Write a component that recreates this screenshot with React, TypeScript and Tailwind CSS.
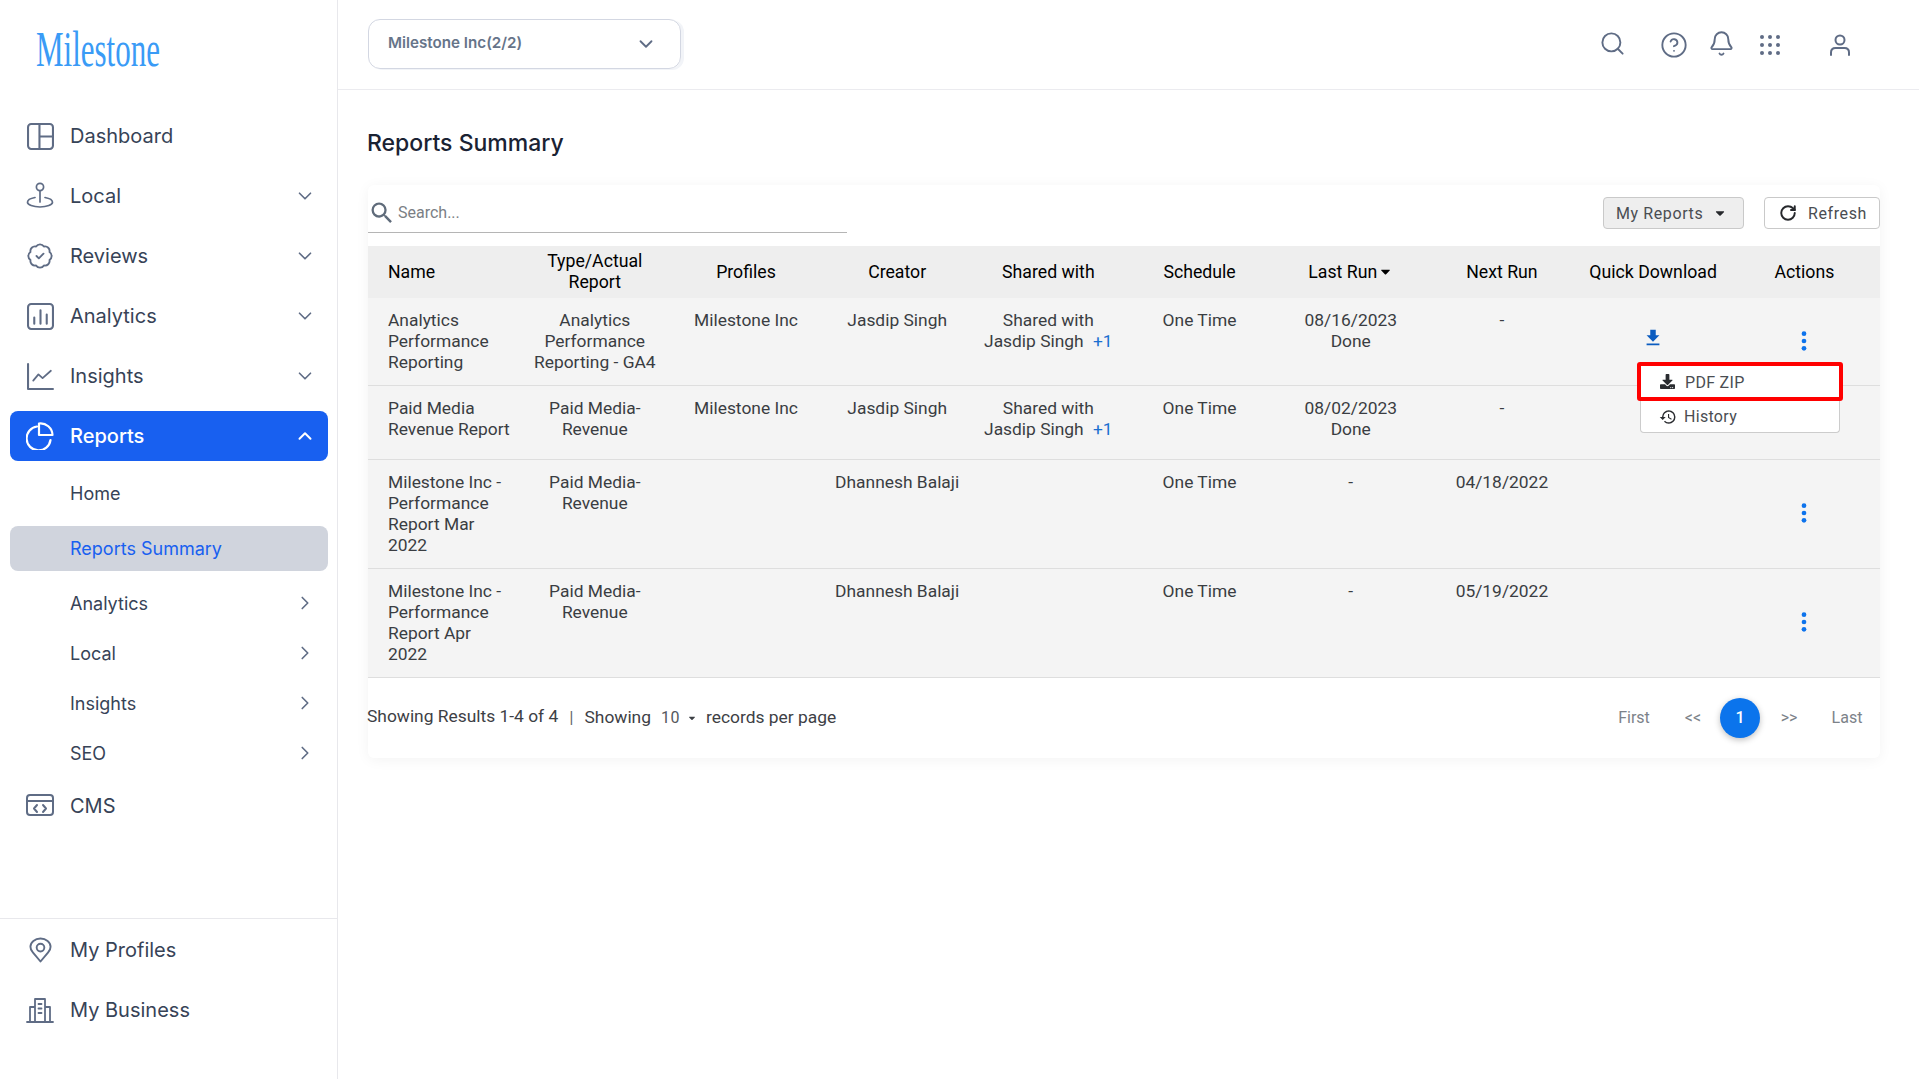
import React from "react";
import {
  BadgeCheck,
  Bell,
  ChevronDown,
  ChevronRight,
  ChevronUp,
  CircleHelp,
  RotateCw,
  Search,
} from "lucide-react";
import { FaCaretDown, FaDownload } from "react-icons/fa";
import { MdFileDownload, MdHistory, MdSearch } from "react-icons/md";

const stroke = {
  fill: "none",
  stroke: "currentColor",
  strokeWidth: 1.7,
  strokeLinecap: "round" as const,
  strokeLinejoin: "round" as const,
};

const DashboardIcon = () => (
  <svg viewBox="0 0 26 26" className="w-[27px] h-[27px]" {...stroke}>
    <rect x="1" y="1" width="24" height="24" rx="3" strokeWidth="2" />
    <path d="M12 1v24M12 13h13" strokeWidth="2" />
  </svg>
);

const LocalIcon = () => (
  <svg viewBox="0 0 28 28" className="w-[28px] h-[28px]" {...stroke}>
    <circle cx="14" cy="5" r="3.6" />
    <path d="M14 9v11" />
    <path d="M9 15.5c-4.5.8-7.5 2.5-7.5 4.7 0 2.6 5.600 4.800 12.500 4.800s12.500-2.200 12.500-4.800c0-2.200-3-3.900-7.500-4.700" />
  </svg>
);

const AnalyticsIcon = () => (
  <svg viewBox="0 0 26 26" className="w-[27px] h-[27px]" {...stroke}>
    <rect x="1" y="1" width="24" height="24" rx="3" strokeWidth="2" />
    <path d="M7 20v-6M13 20V7M19 20V11" strokeWidth="2" />
  </svg>
);

const InsightsIcon = () => (
  <svg viewBox="0 0 26 26" className="w-[27px] h-[27px]" {...stroke}>
    <path d="M1 1v24h24" strokeWidth="2" />
    <path d="M6 17l5-6 4 3.500 8-7" />
  </svg>
);

const ReportsIcon = () => (
  <svg viewBox="0 0 28 28" className="w-[28px] h-[28px]" {...stroke} strokeWidth="2.200">
    <path d="M11 4.500a12 12 0 1 0 13.500 13.500" />
    <path d="M13 1.500v11.500h13.500A12 12 0 0 0 13 1.500z" />
  </svg>
);

const CmsIcon = () => (
  <svg viewBox="0 0 28 24" className="w-[28px] h-[24px]" {...stroke} strokeWidth="2">
    <rect x="1" y="1" width="26" height="20" rx="3" />
    <path d="M1 7h26M11 11l-3 3.500 3 3.500M17 11l3 3.500-3 3.500" />
  </svg>
);

const ProfileIcon = () => (
  <svg viewBox="0 0 24 26" className="w-[23px] h-[26px]" {...stroke} strokeWidth="2">
    <path d="M12 25l-8-9.500C2.500 13.700 1.500 11.600 1.500 9.500c0-4.700 4.700-8.500 10.500-8.500s10.500 3.800 10.500 8.500c0 2.100-1 4.200-2.500 6z" />
    <circle cx="12" cy="10.500" r="4" />
  </svg>
);

const BusinessIcon = () => (
  <svg viewBox="0 0 28 26" className="w-[28px] h-[26px]" {...stroke} strokeWidth="1.800">
    <path d="M1 25h26M9 25V2h10v23M9 10H4v15M19 10h5v15M12.500 7h3M12.500 11.500h3M12.500 16h3" />
  </svg>
);

const GridIcon = () => (
  <svg viewBox="0 0 20 20" className="w-5 h-5" fill="currentColor">
    {[2, 10, 18].map((y) =>
      [2, 10, 18].map((x) => <circle key={`${x}-${y}`} cx={x} cy={y} r="2" />)
    )}
  </svg>
);

const UserIcon = () => (
  <svg viewBox="0 0 20 22" className="w-5 h-[22px]" {...stroke} strokeWidth="2">
    <circle cx="10" cy="6" r="4.500" />
    <path d="M1 21v-2.500C1 15.500 3 14 5.500 14h9c2.500 0 4.500 1.500 4.500 4.500V21" />
  </svg>
);

const DotsIcon = () => (
  <svg viewBox="0 0 6 22" className="w-[6px] h-[20px] mx-auto -mt-[1px]" fill="#0d73ec">
    <circle cx="3" cy="3" r="2.600" />
    <circle cx="3" cy="11" r="2.600" />
    <circle cx="3" cy="19" r="2.600" />
  </svg>
);

const mainNav = [
  { label: "Dashboard", icon: <DashboardIcon /> },
  { label: "Local", icon: <LocalIcon />, arrow: true },
  { label: "Reviews", icon: <BadgeCheck className="w-[28px] h-[28px]" strokeWidth={1.6} />, arrow: true },
  { label: "Analytics", icon: <AnalyticsIcon />, arrow: true },
  { label: "Insights", icon: <InsightsIcon />, arrow: true },
];

const subNav = ["Analytics", "Local", "Insights", "SEO"];

const columns = [
  "Name",
  "Type/Actual Report",
  "Profiles",
  "Creator",
  "Shared with",
  "Schedule",
  "Last Run",
  "Next Run",
  "Quick Download",
  "Actions",
];

const rows = [
  {
    name: "Analytics Performance Reporting",
    type: "Analytics Performance Reporting - GA4",
    profile: "Milestone Inc",
    creator: "Jasdip Singh",
    shared: true,
    lastRun: ["08/16/2023", "Done"],
    nextRun: "-",
    height: "h-[87px]",
    download: true,
    actions: true,
  },
  {
    name: "Paid Media Revenue Report",
    type: "Paid Media-Revenue",
    profile: "Milestone Inc",
    creator: "Jasdip Singh",
    shared: true,
    lastRun: ["08/02/2023", "Done"],
    nextRun: "-",
    height: "h-[74px]",
  },
  {
    name: "Milestone Inc - Performance Report Mar 2022",
    type: "Paid Media-Revenue",
    creator: "Dhannesh Balaji",
    lastRun: ["-"],
    nextRun: "04/18/2022",
    height: "h-[109px]",
    actions: true,
  },
  {
    name: "Milestone Inc - Performance Report Apr 2022",
    type: "Paid Media-Revenue",
    creator: "Dhannesh Balaji",
    lastRun: ["-"],
    nextRun: "05/19/2022",
    height: "h-[109px]",
    actions: true,
  },
];

const App: React.FC = () => {
  return (
    <div className="flex h-screen bg-white font-['Inter',sans-serif] overflow-hidden">
      {/* Sidebar */}
      <aside className="w-[338px] shrink-0 border-r border-[#e8e8ec] flex flex-col">
        <div className="h-[100px] pl-[36px] pt-[23px]">
          <div className="origin-left scale-x-[0.62] font-['Liberation_Serif',serif] text-[50px] leading-[52px] text-[#3a9bf6] whitespace-nowrap">
            Milestone
          </div>
        </div>

        <nav className="flex flex-col pl-[10px] pr-[9px] pt-[6px] text-[#374357]">
          {mainNav.map((item) => (
            <div key={item.label} className="h-[60px] flex items-center pl-[16px] pr-[12px]">
              <span className="w-[28px] flex justify-center text-[#5f6c85]">{item.icon}</span>
              <span className="ml-[16px] text-[20px] flex-1">{item.label}</span>
              {item.arrow && <ChevronDown className="w-[22px] h-[22px] text-[#5f6c85]" strokeWidth={1.8} />}
            </div>
          ))}

          <div className="mt-[5px] h-[50px] bg-[#1860f0] rounded-lg flex items-center pl-[16px] pr-[12px] text-white">
            <span className="w-[28px] flex justify-center"><ReportsIcon /></span>
            <span className="ml-[16px] text-[20px] font-medium flex-1">Reports</span>
            <ChevronUp className="w-[22px] h-[22px]" strokeWidth={2.2} />
          </div>

          <div className="flex flex-col text-[18px] mt-[14px]">
            <div className="h-[36px] flex items-center pl-[60px]">Home</div>
            <div className="mt-[18px] h-[45px] -translate-y-[3px] bg-[#d0d4dd] rounded-lg flex items-center pl-[60px] text-[#1860f0]">
              Reports Summary
            </div>
            <div className="mt-[4px] flex flex-col">
              {subNav.map((item) => (
                <div key={item} className="h-[50px] flex items-center pl-[60px] pr-[12px]">
                  <span className="flex-1">{item}</span>
                  <ChevronRight className="w-[22px] h-[22px] text-[#5f6c85]" strokeWidth={1.8} />
                </div>
              ))}
            </div>
          </div>

          <div className="h-[56px] flex items-center pl-[16px]">
            <span className="w-[28px] flex justify-center text-[#5f6c85]"><CmsIcon /></span>
            <span className="ml-[16px] text-[20px]">CMS</span>
          </div>
        </nav>

        <div className="mt-auto mb-[39px] border-t border-[#e8e8ec] pt-[1px] px-[10px] text-[#374357]">
          <div className="h-[60px] flex items-center pl-[16px]">
            <span className="w-[28px] flex justify-center text-[#5f6c85]"><ProfileIcon /></span>
            <span className="ml-[16px] text-[20px]">My Profiles</span>
          </div>
          <div className="h-[60px] flex items-center pl-[16px]">
            <span className="w-[28px] flex justify-center text-[#5f6c85]"><BusinessIcon /></span>
            <span className="ml-[16px] text-[20px]">My Business</span>
          </div>
        </div>
      </aside>

      {/* Main */}
      <div className="flex-1 min-w-0 flex flex-col">
        <header className="h-[90px] shrink-0 border-b border-[#ebebef] flex items-center pl-[30px] text-[#5f6c85]">
          <div className="w-[313px] h-[50px] -translate-y-[1px] border border-[#d3d7e2] rounded-xl flex items-center pl-[19px] pr-[23px] shadow-[3px_1px_0_#f2f4f8]">
            <span className="flex-1 text-[15.2px] font-semibold text-[#667489]">Milestone Inc(2/2)</span>
            <ChevronDown className="w-[22px] h-[22px]" strokeWidth={2} />
          </div>
          <div className="ml-auto flex items-center pr-[69px]">
            <Search className="w-[27px] h-[27px] -translate-y-[1px]" strokeWidth={1.7} />
            <CircleHelp className="w-[28px] h-[28px] ml-[34px]" strokeWidth={1.6} />
            <Bell className="w-[27px] h-[27px] ml-[20px] -translate-y-[1px]" strokeWidth={1.7} />
            <span className="ml-[25px]"><GridIcon /></span>
            <span className="ml-[50px]"><UserIcon /></span>
          </div>
        </header>

        <main className="flex-1 pl-[30px] pr-[39px] font-['Roboto',sans-serif]">
          <h1 className="mt-[36px] h-[35px] -ml-[1px] flex items-center font-['Inter',sans-serif] text-[23px] font-medium text-[#1a2233]">
            Reports Summary
          </h1>

          <div className="relative mt-[24px] bg-white rounded-md shadow-[0_2px_14px_rgba(0,0,0,0.05)]">
            {/* Toolbar */}
            <div className="h-[61px] flex items-start">
              <div className="mt-[9px] w-[479px] h-[39px] border-b border-[#b5b5b5] flex items-center">
                <MdSearch className="w-[28px] h-[28px] text-[#5f6b7a]" />
                <span className="ml-[2px] text-[16px] text-[#7b7f85]">Search...</span>
              </div>
              <div className="ml-auto mt-[12px] flex gap-[20px] text-[16px] tracking-[0.6px] text-[#4a4d52]">
                <div className="w-[141px] h-[32px] bg-[#eeeeee] border border-[#c9c9c9] rounded flex items-center pl-[12px]">
                  <span className="translate-y-[1px]">My Reports</span>
                  <FaCaretDown className="ml-[10px] w-[14px] h-[14px] text-[#26282c]" />
                </div>
                <div className="w-[116px] h-[32px] bg-white border border-[#c9c9c9] rounded flex items-center pl-[14px]">
                  <RotateCw className="w-[18px] h-[18px] text-[#26282c]" strokeWidth={2.6} />
                  <span className="ml-[11px] translate-y-[1px]">Refresh</span>
                </div>
              </div>
            </div>

            {/* Table */}
            <table className="w-full table-fixed border-collapse text-[17.4px] leading-[21px] text-[#3a3d42]">
              <thead>
                <tr className="h-[52px] bg-[#eeeeee] text-black text-[17.7px]">
                  {columns.map((col, i) => (
                    <th
                      key={col}
                      className={`font-normal align-middle ${i === 0 ? "text-left px-[20px]" : "text-center"} ${i === 8 ? "px-0 whitespace-nowrap" : "px-[20px]"}`}
                    >
                      {col}
                      {col === "Last Run" && <FaCaretDown className="inline w-[15px] h-[15px] ml-[1px] -mt-[2px]" />}
                    </th>
                  ))}
                </tr>
              </thead>
              <tbody>
                {rows.map((row) => (
                  <tr key={row.name} className={`${row.height} bg-[#f4f4f4] border-b border-[#dedede] align-top`}>
                    <td className="pl-[20px] pr-[6px] pt-[12px]">{row.name}</td>
                    <td className="px-[10px] pt-[12px] text-center">{row.type}</td>
                    <td className="px-[4px] pt-[12px] text-center">{row.profile}</td>
                    <td className="px-[4px] pt-[12px] text-center">{row.creator}</td>
                    <td className="px-[4px] pt-[12px] text-center">
                      {row.shared && (
                        <>
                          Shared with
                          <br />
                          Jasdip Singh <span className="ml-[5px] text-[#1b6fd0]">+1</span>
                        </>
                      )}
                    </td>
                    <td className="px-[4px] pt-[12px] text-center">One Time</td>
                    <td className="px-[4px] pt-[12px] text-center">
                      {row.lastRun.map((line) => (
                        <div key={line}>{line}</div>
                      ))}
                    </td>
                    <td className="px-[4px] pt-[12px] text-center">{row.nextRun}</td>
                    <td className="align-middle">
                      {row.download && <MdFileDownload className="mx-auto w-[22px] h-[22px] -mt-[6px] text-[#0b5cc0]" />}
                    </td>
                    <td className="align-middle">{row.actions && <DotsIcon />}</td>
                  </tr>
                ))}
              </tbody>
            </table>

            {/* Footer */}
            <div className="h-[80px] flex items-center text-[#3d4045] text-[17.4px]">
              <span className="-ml-[1px] -translate-y-[1px]">Showing Results 1-4 of 4</span>
              <span className="ml-[11px] mr-[11px] text-[#6b6e73]">|</span>
              <span>Showing</span>
              <span className="ml-[10px] tracking-[0.5px] text-[#55585d] text-[16px]">10</span>
              <FaCaretDown className="ml-[7px] w-[10px] h-[10px] text-[#3d4045]" />
              <span className="ml-[9px]">records per page</span>
              <div className="ml-auto flex items-center text-[16px] text-[#7c8289]">
                <span className="w-[44px] text-center">First</span>
                <span className="ml-[22px] w-[30px] text-center">&lt;&lt;</span>
                <span className="ml-[12px] w-[40px] h-[40px] rounded-full bg-[#0b74ec] text-white font-medium flex items-center justify-center shadow-[0_2px_6px_rgba(0,0,0,0.25)]">
                  1
                </span>
                <span className="ml-[14px] w-[30px] text-center">&gt;&gt;</span>
                <span className="ml-[25px] mr-[15px] w-[36px] text-center">Last</span>
              </div>
            </div>

            {/* Open download menu */}
            <div className="absolute left-[1269px] top-[177px] w-[206px] text-[16px] tracking-[0.3px] text-[#4a4d52]">
              <div className="h-[39px] bg-white border-[4px] border-[#ff0000] rounded-[3px] flex items-center pl-[19px]">
                <FaDownload className="w-[15px] h-[15px] text-[#2a2c30]" />
                <span className="ml-[10px] translate-y-[1px]">PDF ZIP</span>
              </div>
              <div className="mx-[3px] h-[32px] bg-white border border-t-0 border-[#cccccc] rounded-b flex items-center pl-[18px]">
                <MdHistory className="w-[18px] h-[18px] text-[#2a2c30]" />
                <span className="ml-[7px]">History</span>
              </div>
            </div>
          </div>
        </main>
      </div>
    </div>
  );
};

export default App;
